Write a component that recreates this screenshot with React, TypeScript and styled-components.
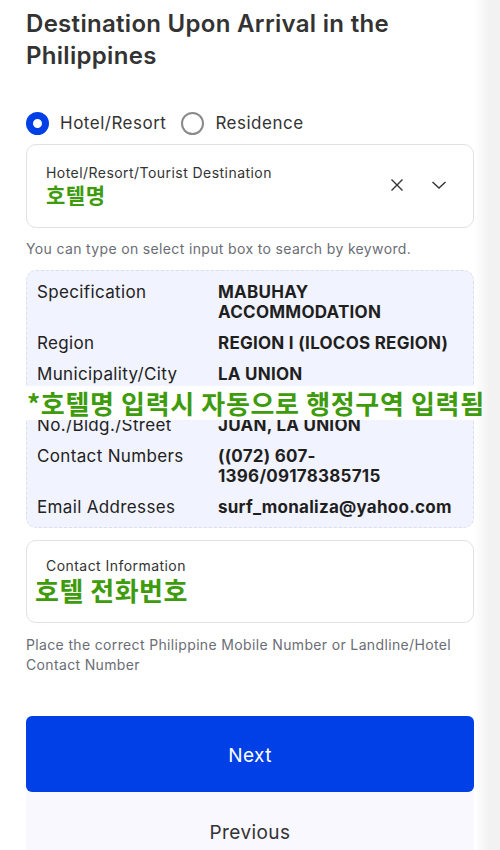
import React from "react";
import styled, { createGlobalStyle } from "styled-components";

const Global = createGlobalStyle`
  html, body { margin: 0; padding: 0; background: #fff; }
  body { font-family: Inter, "Noto Sans", sans-serif; color: #333; }
  * { box-sizing: border-box; }
`;

const Page = styled.div`
  position: relative;
  width: 500px;
  height: 850px;
  overflow: hidden;
  padding: 8px 26px 0 26px;
`;

const EdgeShade = styled.div`
  position: absolute;
  top: 0;
  right: 0;
  width: 26px;
  height: 100%;
  background: linear-gradient(to right, rgba(0,0,0,0), rgba(0,0,0,0.05) 60%, rgba(0,0,0,0.05));
  pointer-events: none;
`;

const Title = styled.h1`
  margin: 0;
  font-size: 24px;
  line-height: 32px;
  font-weight: 600;
  color: #333;
  letter-spacing: 0.3px;
`;

const RadioRow = styled.div`
  display: flex;
  align-items: center;
  margin-top: 38px;
  height: 26px;
`;

const RadioItem = styled.label`
  display: flex;
  align-items: center;
  gap: 11px;
  margin-right: 15px;
  font-size: 17px;
  letter-spacing: 0.5px;
  color: #333;
`;

const RadioDot = styled.span<{ $on?: boolean }>`
  width: 23px;
  height: 23px;
  border-radius: 50%;
  flex: none;
  border: ${(p) => (p.$on ? "7px solid #0040e6" : "2px solid #8a8a8a")};
  background: #fff;
`;

const Field = styled.div<{ $h: number; $mt: number }>`
  margin-top: ${(p) => p.$mt}px;
  height: ${(p) => p.$h}px;
  border: 1px solid #e2e2e2;
  border-radius: 10px;
  display: flex;
  align-items: center;
  padding: 0 19px;
`;

const FieldBody = styled.div`
  flex: 1;
  display: flex;
  flex-direction: column;
  margin-top: -2px;
`;

const FieldLabel = styled.div`
  font-size: 14px;
  line-height: 18px;
  letter-spacing: 0.45px;
  color: #333;
`;

const GreenValue = styled.div<{ $size: number; $shift?: number }>`
  font-family: "Noto Sans CJK KR", sans-serif;
  font-weight: 700;
  font-size: ${(p) => p.$size}px;
  line-height: ${(p) => p.$size + 4}px;
  letter-spacing: 0.5px;
  color: #3e9b0c;
  margin-left: ${(p) => p.$shift ?? 0}px;
`;

const Icons = styled.div`
  display: flex;
  align-items: center;
  gap: 27px;
  margin-top: -2px;
  margin-right: 7px;
`;

const Hint = styled.p<{ $mt: number }>`
  margin: ${(p) => p.$mt}px 0 0;
  font-size: 14px;
  line-height: 20px;
  letter-spacing: 0.35px;
  color: #6a6d75;
`;

const InfoBox = styled.div`
  position: relative;
  margin-top: 11px;
  background: #f1f3fe;
  border: 1px dashed #dcdfea;
  border-radius: 10px;
  padding: 11px 10px 10px 10px;
  display: flex;
  flex-direction: column;
  gap: 11px;
`;

const InfoRow = styled.div`
  display: grid;
  grid-template-columns: 181px 1fr;
  font-size: 17px;
  line-height: 20px;
`;

const InfoLabel = styled.div`
  color: #222;
  letter-spacing: 0.35px;
  white-space: pre-line;
`;

const InfoValue = styled.div`
  font-weight: 700;
  color: #1f1f1f;
  letter-spacing: 0.25px;
  white-space: pre-line;
`;

const Notice = styled.div`
  position: absolute;
  left: -1px;
  top: 115px;
  width: 460px;
  height: 34px;
  background: #fff;
  font-family: "Noto Sans CJK KR", sans-serif;
  font-weight: 700;
  font-size: 26px;
  line-height: 34px;
  letter-spacing: 0.65px;
  color: #3e9b0c;
  padding-left: 1px;
  white-space: nowrap;
`;

const Buttons = styled.div`
  margin-top: 41px;
  display: flex;
  flex-direction: column;
`;

const Btn = styled.button<{ $primary?: boolean }>`
  height: 76px;
  flex: none;
  border: none;
  font-family: Inter, sans-serif;
  font-size: 19px;
  letter-spacing: 0.4px;
  border-radius: ${(p) => (p.$primary ? "6px" : "0")};
  background: ${(p) => (p.$primary ? "#0040e6" : "#f8f8fe")};
  color: ${(p) => (p.$primary ? "#fff" : "#333")};
  padding: ${(p) => (p.$primary ? "2px 0 0" : "4px 0 0")};
`;

const rows: [string, string][] = [
  ["Specification", "MABUHAY\nACCOMMODATION"],
  ["Region", "REGION I (ILOCOS REGION)"],
  ["Municipality/City", "LA UNION"],
  ["House\nNo./Bldg./Street", "URBIZTONDO, SAN\nJUAN, LA UNION"],
  ["Contact Numbers", "((072) 607-\n1396/09178385715"],
  ["Email Addresses", "surf_monaliza@yahoo.com"],
];

export default function App() {
  return (
    <>
      <Global />
      <Page>
        <Title>Destination Upon Arrival in the Philippines</Title>
        <RadioRow>
          <RadioItem>
            <RadioDot $on />
            Hotel/Resort
          </RadioItem>
          <RadioItem>
            <RadioDot />
            Residence
          </RadioItem>
        </RadioRow>
        <Field $h={84} $mt={8}>
          <FieldBody>
            <FieldLabel>Hotel/Resort/Tourist Destination</FieldLabel>
            <GreenValue $size={21}>호텔명</GreenValue>
          </FieldBody>
          <Icons>
            <svg width="14" height="14" viewBox="0 0 14 14" fill="none" stroke="#333" strokeWidth="1.4">
              <path d="M1.5 1.5l11 11M12.5 1.5l-11 11" />
            </svg>
            <svg width="16" height="10" viewBox="0 0 16 10" fill="none" stroke="#333" strokeWidth="1.4">
              <path d="M1.5 2l6.5 6 6.5-6" />
            </svg>
          </Icons>
        </Field>
        <Hint $mt={11}>You can type on select input box to search by keyword.</Hint>
        <InfoBox>
          {rows.map(([l, v]) => (
            <InfoRow key={l}>
              <InfoLabel>{l}</InfoLabel>
              <InfoValue>{v}</InfoValue>
            </InfoRow>
          ))}
          <Notice>*호텔명 입력시 자동으로 행정구역 입력됨</Notice>
        </InfoBox>
        <Field $h={83} $mt={12}>
          <FieldBody>
            <FieldLabel>Contact Information</FieldLabel>
            <GreenValue $size={26} $shift={-11}>호텔 전화번호</GreenValue>
          </FieldBody>
        </Field>
        <Hint $mt={12}>Place the correct Philippine Mobile Number or Landline/Hotel Contact Number</Hint>
        <Buttons>
          <Btn $primary>Next</Btn>
          <Btn>Previous</Btn>
        </Buttons>
        <EdgeShade />
      </Page>
    </>
  );
}
